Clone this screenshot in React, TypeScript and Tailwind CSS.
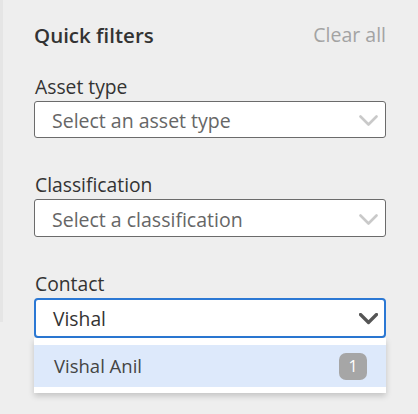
import React from "react";

const Chevron = ({ color, width }: { color: string; width: number }) => (
  <svg width="19" height="12" viewBox="0 0 19 12" fill="none">
    <polyline points="1.5,1.5 9.5,9.5 17.5,1.5" stroke={color} strokeWidth={width} strokeLinecap="round" strokeLinejoin="round" />
  </svg>
);

export default function App() {
  return (
    <div
      className="relative flex w-[418px] h-[414px] overflow-hidden bg-[#eeeeee]"
      style={{ fontFamily: '"Open Sans", "Noto Sans", sans-serif' }}
    >
      <div className="w-[3px] h-[322px] shrink-0 bg-[#e5e5e5]" />
      <div className="flex flex-1 flex-col pl-[31px] pr-[32px] pt-[22px]">
        <div className="flex h-[26px] items-center justify-between">
          <span className="text-[20.5px] leading-[26px] font-semibold text-[#333333]">Quick filters</span>
          <span className="text-[19.5px] leading-[26px] text-[#a3a3a3]">Clear all</span>
        </div>

        <div className="mt-[27px] flex flex-col">
          <span className="pl-[1px] text-[19.3px] leading-[24px] text-[#333333]">Asset type</span>
          <div className="mt-[2px] flex h-[37px] items-center justify-between rounded-[3px] border border-[#6b6b6b] bg-white pt-[3px] pl-[17px] pr-[7px]">
            <span className="text-[19.5px] text-[#666666]">Select an asset type</span>
            <Chevron color="#c9c9c9" width={2.6} />
          </div>
        </div>

        <div className="mt-[35px] flex flex-col">
          <span className="pl-[1px] text-[19.3px] leading-[24px] text-[#333333]">Classification</span>
          <div className="mt-[2px] flex h-[38px] items-center justify-between rounded-[3px] border border-[#6b6b6b] bg-white pt-[3px] pl-[17px] pr-[7px]">
            <span className="text-[19.5px] text-[#666666]">Select a classification</span>
            <Chevron color="#c9c9c9" width={2.6} />
          </div>
        </div>

        <div className="mt-[35px] flex flex-col">
          <span className="pl-[1px] text-[19.3px] leading-[24px] text-[#333333]">Contact</span>
          <div className="relative mt-[2px]">
            <div className="flex h-[40px] items-center justify-between rounded-[4px] border-2 border-[#2b78d4] bg-white pt-[2px] pl-[17px] pr-[6px]">
              <span className="text-[19.3px] text-[#333333]">Vishal</span>
              <Chevron color="#555555" width={3.2} />
            </div>
            <div className="absolute left-0 right-0 top-[40px] bg-white pt-[7px] pb-[6px] shadow-[0_3px_6px_rgba(0,0,0,0.18)]">
              <div className="flex h-[42px] items-center justify-between bg-[#dde9fb] pl-[20px] pr-[19px]">
                <span className="text-[18.5px] text-[#444444]">Vishal Anil</span>
                <span className="flex h-[27px] w-[28px] items-center justify-center rounded-[7px] bg-[#a6a6a6] text-[16px] text-white">1</span>
              </div>
            </div>
          </div>
        </div>
      </div>
    </div>
  );
}
